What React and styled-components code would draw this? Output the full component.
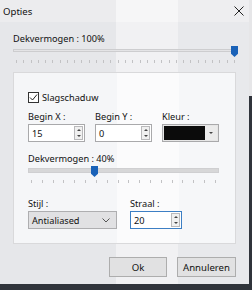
import React from "react";
import styled, { createGlobalStyle } from "styled-components";

const GlobalStyle = createGlobalStyle`
    html, body {
        margin: 0;
        padding: 0;
    }
    body {
        width: 252px;
        height: 290px;
        overflow: hidden;
        background: linear-gradient(180deg, #e6e6e8 0 96px, #30343b 96px);
        font-family: "Noto Sans", "Open Sans", sans-serif;
    }
`;

const Dialog = styled.div`
    box-sizing: border-box;
    width: 249px;
    height: 284px;
    display: flex;
    flex-direction: column;
    color: #111;
    font-size: 9.2px;
    background: linear-gradient(90deg, #e6e7ea 0 116px, #f1f1f3 116px 178px, #e8e9ec 178px);
`;

const TitleBar = styled.div`
    height: 22px;
    display: flex;
    align-items: center;
    justify-content: space-between;
    padding: 0 5px 0 3px;
    font-size: 9.6px;
    background: linear-gradient(90deg, #ececee 0 116px, #f6f6f7 116px 178px, #eeeef0 178px);
`;

const Body = styled.div`
    flex: 1;
    display: flex;
    flex-direction: column;
    padding: 11px 13px 0 13px;
`;

const Label = styled.div`
    height: 12px;
    line-height: 12px;
    white-space: nowrap;
`;

const SliderBox = styled.div`
    position: relative;
    width: ${(p) => p.width}px;
    height: ${(p) => (p.thick ? 19 : 18)}px;
`;

const Track = styled.div`
    position: absolute;
    left: 0;
    right: 0;
    top: ${(p) => (p.thick ? 3 : 4)}px;
    height: ${(p) => (p.thick ? 5 : 3)}px;
    background: ${(p) => (p.thick ? "#d7d7d8" : "#e4e4e6")};
    border: 1px solid ${(p) => (p.thick ? "#cfcfd1" : "#cdcdcf")};
    box-sizing: border-box;
`;

const Thumb = styled.div`
    position: absolute;
    top: 1px;
    width: 7px;
    height: 11px;
    background: #1a62b8;
    clip-path: polygon(0 0, 100% 0, 100% 70%, 50% 100%, 0 70%);
`;

const Ticks = styled.div`
    position: absolute;
    left: 3px;
    right: 3px;
    top: 15px;
    display: flex;
    justify-content: space-between;
`;

const Tick = styled.span`
    width: 1px;
    height: 3px;
    background: #c2c2c4;
`;

const GroupBox = styled.div`
    margin-top: 9px;
    box-sizing: border-box;
    height: 172px;
    border: 1px solid #d9d9db;
    background: linear-gradient(90deg, #f5f6f8 0 103px, #fbfbfc 103px 165px, #f6f7f9 165px);
    padding: 18px 0 0 14px;
    display: flex;
    flex-direction: column;
`;

const CheckRow = styled.label`
    display: flex;
    align-items: center;
    gap: 3px;
    height: 12px;
`;

const CheckBox = styled.span`
    box-sizing: border-box;
    width: 11px;
    height: 11px;
    border: 1px solid #333;
    background: #fff;
    display: flex;
    align-items: center;
    justify-content: center;
`;

const Row = styled.div`
    display: flex;
    gap: ${(p) => p.gap || 9}px;
    margin-top: ${(p) => p.mt || 0}px;
`;

const Field = styled.div`
    display: flex;
    flex-direction: column;
    gap: 1px;
    width: ${(p) => p.width}px;
`;

const SpinInput = styled.div`
    box-sizing: border-box;
    height: 18px;
    display: flex;
    align-items: center;
    justify-content: space-between;
    padding: 0 1px 0 3px;
    background: #fff;
    border: 1px solid ${(p) => (p.focused ? "#3d7fc4" : "#a9a9ab")};
`;

const SpinButtons = styled.div`
    box-sizing: border-box;
    width: 9px;
    height: 14px;
    border: 1px solid #b9b9bb;
    background: #f0f0f0;
    display: flex;
    flex-direction: column;
    align-items: center;
    justify-content: space-around;
`;

const Arrow = styled.span`
    width: 0;
    height: 0;
    border-left: 2px solid transparent;
    border-right: 2px solid transparent;
    ${(p) => (p.up ? "border-bottom: 2px solid #444;" : "border-top: 2px solid #444;")}
`;

const ColorPicker = styled.div`
    box-sizing: border-box;
    height: 18px;
    display: flex;
    align-items: stretch;
    padding: 1px;
    border: 1px solid #a9a9ab;
    background: #e6e6e6;
`;

const Swatch = styled.div`
    flex: 1;
    background: ${(p) => p.color};
`;

const DropButton = styled.div`
    width: 12px;
    display: flex;
    align-items: center;
    justify-content: center;
    background: #ebebeb;
`;

const Combo = styled.div`
    box-sizing: border-box;
    height: 18px;
    display: flex;
    align-items: center;
    justify-content: space-between;
    padding: 0 6px 0 3px;
    background: #e1e1e3;
    border: 1px solid #aeaeb0;
`;

const ButtonRow = styled.div`
    display: flex;
    justify-content: flex-end;
    gap: 10px;
    margin-top: 13px;
`;

const Button = styled.button`
    box-sizing: border-box;
    width: ${(p) => p.width}px;
    height: 20px;
    padding: 0;
    font-family: inherit;
    font-size: 9.6px;
    color: #111;
    background: #e1e1e2;
    border: 1px solid #adadad;
`;

function Slider({ width, thumbX, ticks, thick }) {
    return (
        <SliderBox width={width} thick={thick}>
            <Track thick={thick} />
            <Thumb style={{ left: thumbX }} />
            <Ticks>
                {Array.from({ length: ticks }).map((_, i) => (
                    <Tick key={i} />
                ))}
            </Ticks>
        </SliderBox>
    );
}

function Spin({ value, focused }) {
    return (
        <SpinInput focused={focused}>
            <span>{value}</span>
            <SpinButtons>
                <Arrow up />
                <Arrow />
            </SpinButtons>
        </SpinInput>
    );
}

export default function App() {
    return (
        <>
            <GlobalStyle />
            <Dialog>
                <TitleBar>
                    <span>Opties</span>
                    <svg width="10" height="10" viewBox="0 0 10 10">
                        <path d="M0.5 0.5 L9.5 9.5 M9.5 0.5 L0.5 9.5" stroke="#222" strokeWidth="1" />
                    </svg>
                </TitleBar>
                <Body>
                    <Label>Dekvermogen : 100%</Label>
                    <Slider width={225} thumbX={218} ticks={31} />
                    <GroupBox>
                        <CheckRow>
                            <CheckBox>
                                <svg width="9" height="9" viewBox="0 0 9 9">
                                    <path d="M1 4.5 L3.5 7 L8 1.5" fill="none" stroke="#222" strokeWidth="1" />
                                </svg>
                            </CheckBox>
                            <span>Slagschaduw</span>
                        </CheckRow>
                        <Row mt={8} gap={10}>
                            <Field width={57}>
                                <Label>Begin X :</Label>
                                <Spin value="15" />
                            </Field>
                            <Field width={57}>
                                <Label>Begin Y :</Label>
                                <Spin value="0" />
                            </Field>
                            <Field width={57}>
                                <Label>Kleur :</Label>
                                <ColorPicker>
                                    <Swatch color="#0b0b0b" />
                                    <DropButton>
                                        <Arrow />
                                    </DropButton>
                                </ColorPicker>
                            </Field>
                        </Row>
                        <Row mt={11}>
                            <Label>Dekvermogen : 40%</Label>
                        </Row>
                        <Slider width={191} thumbX={63} ticks={18} thick />
                        <Row mt={14} gap={13}>
                            <Field width={89}>
                                <Label>Stijl :</Label>
                                <Combo>
                                    <span>Antialiased</span>
                                    <svg width="8" height="5" viewBox="0 0 8 5">
                                        <path d="M0.5 0.5 L4 4 L7.5 0.5" fill="none" stroke="#555" strokeWidth="1" />
                                    </svg>
                                </Combo>
                            </Field>
                            <Field width={52}>
                                <Label>Straal :</Label>
                                <Spin value="20" focused />
                            </Field>
                        </Row>
                    </GroupBox>
                    <ButtonRow>
                        <Button width={58}>Ok</Button>
                        <Button width={59}>Annuleren</Button>
                    </ButtonRow>
                </Body>
            </Dialog>
        </>
    );
}
